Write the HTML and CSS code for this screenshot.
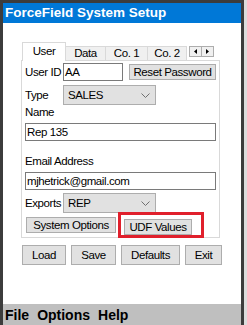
FILE: index.html
```html
<!DOCTYPE html>
<html>
<head>
<meta charset="utf-8">
<link rel="stylesheet" href="styles.css">
</head>
<body>
<div class="window">
  <div class="titlebar">ForceField System Setup</div>
  <div class="client">
    <div class="tabs">
      <div class="tabstrip">
        <div class="tab active">User</div>
        <div class="tab t-data">Data</div>
        <div class="tab t-co1">Co. 1</div>
        <div class="tab t-co2">Co. 2</div>
        <div class="scroller">
          <span class="arrow"><svg width="3" height="5" viewBox="0 0 3 5"><polygon points="3,0 3,5 0,2.5" fill="#000"/></svg></span>
          <span class="arrow"><svg width="3" height="5" viewBox="0 0 3 5"><polygon points="0,0 0,5 3,2.5" fill="#000"/></svg></span>
        </div>
      </div>
      <div class="panel">
        <div class="row r-user">
          <span class="lbl w-lbl">User ID</span>
          <span class="input in-short">AA</span>
          <span class="btn b-reset">Reset Password</span>
        </div>
        <div class="row r-type">
          <span class="lbl w-lbl">Type</span>
          <span class="select"><span>SALES</span><svg width="9" height="5" viewBox="0 0 9 5"><polyline points="0.5,0.5 4.5,4.5 8.5,0.5" fill="none" stroke="#707070" stroke-width="1"/></svg></span>
        </div>
        <div class="lbl-block l-name">Name</div>
        <div class="input in-wide">Rep 135</div>
        <div class="lbl-block l-email">Email Address</div>
        <div class="input in-wide">mjhetrick@gmail.com</div>
        <div class="row r-exports">
          <span class="lbl w-lbl">Exports</span>
          <span class="select"><span>REP</span><svg width="9" height="5" viewBox="0 0 9 5"><polyline points="0.5,0.5 4.5,4.5 8.5,0.5" fill="none" stroke="#707070" stroke-width="1"/></svg></span>
        </div>
        <div class="row r-opts">
          <span class="btn b-sys">System Options</span>
          <span class="highlight"><span class="btn b-udf">UDF Values</span></span>
        </div>
      </div>
    </div>
    <div class="actions">
      <span class="btn b-load">Load</span>
      <span class="btn b-save">Save</span>
      <span class="btn b-def">Defaults</span>
      <span class="btn b-exit">Exit</span>
    </div>
  </div>
  <div class="menubar"><span>File</span><span>Options</span><span>Help</span></div>
</div>
</body>
</html>
```

FILE: styles.css
```css
* { box-sizing: border-box; }
html, body { margin: 0; padding: 0; }
body {
  width: 247px;
  height: 325px;
  background: #dcdcdc;
  overflow: hidden;
  font-family: "Liberation Sans", Arial, sans-serif;
  font-size: 11.5px;
  letter-spacing: -0.4px;
  color: #000;
}
.window {
  width: 244px;
  height: 325px;
  border-left: 3px solid #3c3c3c;
  border-right: 3px solid #3c3c3c;
  border-top: 3px solid #3c3c3c;
  display: flex;
  flex-direction: column;
}
.titlebar {
  height: 20px;
  background: #0078d7;
  color: #fff;
  font-weight: bold;
  font-size: 13.5px;
  letter-spacing: 0;
  line-height: 20px;
  padding-left: 2px;
  white-space: nowrap;
}
.client {
  height: 281px;
  background: #fff;
  padding-left: 18px;
  padding-top: 19px;
}
.tabstrip {
  height: 18px;
  display: flex;
  align-items: flex-end;
  padding-left: 1px;
}
.tab {
  height: 14px;
  line-height: 13px;
  text-align: center;
  background: #f0f0f0;
  border: 1px solid #d9d9d9;
  border-bottom: none;
  border-left: none;
  white-space: nowrap;
  overflow: hidden;
}
.tab.active {
  width: 44px;
  height: 19px;
  margin-bottom: -1px;
  background: #fff;
  border-left: 1px solid #d9d9d9;
  line-height: 17px;
  position: relative;
  z-index: 1;
}
.t-data { width: 40px; }
.t-co1 { width: 42px; }
.t-co2 { width: 39px; }
.scroller {
  display: flex;
  margin-left: 2px;
  margin-bottom: 3px;
}
.arrow {
  width: 13px;
  height: 11px;
  border: 1px solid #adadad;
  background: #f0f0f0;
  display: flex;
  align-items: center;
  justify-content: center;
}
.arrow + .arrow { border-left: none; width: 12px; }
.panel {
  width: 199px;
  height: 178px;
  border: 1px solid #d9d9d9;
  padding: 2px 3px 0 3px;
  background: #fff;
}
.row {
  display: flex;
  align-items: flex-start;
}
.lbl {
  line-height: 18px;
  white-space: nowrap;
}
.w-lbl { width: 38px; }
.input {
  height: 18px;
  border: 1px solid #7a7a7a;
  background: #fff;
  line-height: 16px;
  padding-left: 1px;
  white-space: nowrap;
  overflow: hidden;
}
.in-short { width: 60px; }
.in-wide { width: 191px; margin-top: 3px; }
.btn {
  display: flex;
  align-items: center;
  justify-content: center;
  background: #e1e1e1;
  border: 1px solid #adadad;
  white-space: nowrap;
}
.b-reset {
  width: 87px;
  height: 16px;
  margin-left: 6px;
  margin-top: 1px;
}
.r-type { margin-top: 4px; }
.r-type .lbl, .r-exports .lbl { line-height: 20px; }
.select {
  width: 93px;
  height: 20px;
  background: #e1e1e1;
  border: 1px solid #adadad;
  display: flex;
  align-items: center;
  justify-content: space-between;
  padding-left: 4px;
  padding-right: 5px;
}
.lbl-block { line-height: 15px; height: 15px; }
.l-name { margin-top: 0; }
.l-email { margin-top: 13px; }
.r-exports { margin-top: 3px; }
.r-opts { margin-top: -1px; }
.b-sys {
  width: 90px;
  height: 16px;
  margin-left: 1px;
  margin-top: 5px;
}
.highlight {
  width: 86px;
  height: 26px;
  margin-left: 2px;
  border: 3px solid #e0202c;
  padding: 4px 0 0 3px;
  position: relative;
  z-index: 1;
}
.b-udf { width: 68px; height: 16px; }
.actions {
  display: flex;
  gap: 5px;
  margin-top: 7px;
  padding-left: 1px;
}
.actions .btn { height: 20px; }
.b-load { width: 44px; }
.b-save { width: 45px; }
.b-def { width: 59px; }
.b-exit { width: 37px; }
.menubar {
  height: 21px;
  background: #bfbfbf;
  display: flex;
  align-items: center;
  gap: 8px;
  padding-left: 2px;
  font-weight: bold;
  font-size: 14px;
  letter-spacing: 0;
}
```
